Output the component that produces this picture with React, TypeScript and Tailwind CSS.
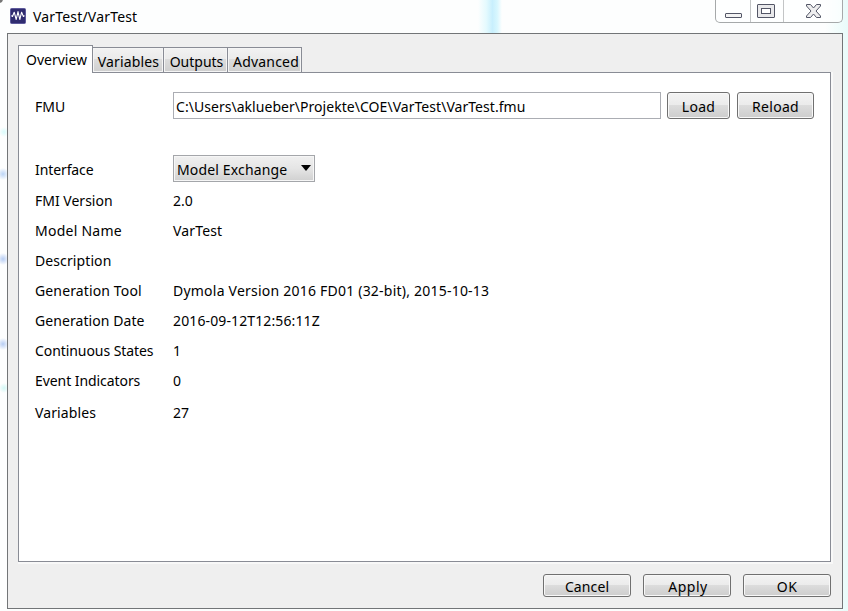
import type { ReactNode } from "react";

function Button({ children, className }: { children: ReactNode; className: string }) {
  return (
    <button
      className={`flex shrink-0 items-center justify-center rounded-[3px] border border-[#707070] bg-[linear-gradient(#f3f3f3_0%,#ebebeb_49%,#dcdcdc_50%,#cdcdcd_100%)] shadow-[inset_0_0_0_1px_#f8f8f8] ${className}`}
    >
      {children}
    </button>
  );
}

function Tab({ children, className }: { children: ReactNode; className: string }) {
  return (
    <div
      className={`mb-px flex h-[25px] items-center justify-center border-t border-r border-[#898c95] bg-[linear-gradient(#f2f2f2_0%,#ebebeb_45%,#dddddd_46%,#cfcfcf_100%)] pt-[3px] shadow-[inset_0_0_0_1px_#f5f5f5] ${className}`}
    >
      {children}
    </div>
  );
}

const rows = [
  { label: "FMI Version", value: "2.0", h: "h-[30px]", lt: "", vt: "" },
  { label: "Model Name", value: "VarTest", h: "h-[30px]", lt: "tracking-[0.25px]", vt: "tracking-[0.15px]" },
  { label: "Description", value: "", h: "h-[30px]", lt: "tracking-[0.1px]", vt: "" },
  {
    label: "Generation Tool",
    value: "Dymola Version 2016 FD01 (32-bit), 2015-10-13",
    h: "h-[30px]",
    lt: "tracking-[0.13px]",
    vt: "tracking-[0.22px]",
  },
  { label: "Generation Date", value: "2016-09-12T12:56:11Z", h: "h-[30px]", lt: "tracking-[0.07px]", vt: "tracking-[0.12px]" },
  { label: "Continuous States", value: "1", h: "h-[30px]", lt: "tracking-[-0.07px]", vt: "" },
  { label: "Event Indicators", value: "0", h: "h-[30px]", lt: "tracking-[-0.07px]", vt: "" },
  { label: "Variables", value: "27", h: "h-[34px]", lt: "tracking-[0.12px]", vt: "" },
];

function AppIcon() {
  return (
    <svg width="16" height="16" viewBox="0 0 16 16" className="block">
      <rect x="0.5" y="0.5" width="15" height="15" rx="1" fill="#302c70" stroke="#5d599b" />
      <path
        d="M1.5 7.5L2.5 8.5L4.2 4.2L6.2 11.5L8 3.6L9.8 11.5L11.6 4.2L13.4 8.5L14.4 7.5"
        fill="none"
        stroke="#fff"
        strokeWidth="1.1"
        strokeLinejoin="round"
      />
    </svg>
  );
}

function WindowControls() {
  return (
    <div className="flex h-[23px] w-[128px] rounded-b-[5px] border border-t-0 border-[#a6a9aa] bg-white/60">
      <div className="w-[35px] border-r border-[#c3c5c6]">
        <svg width="34" height="22" className="block">
          <rect x="9.5" y="13.5" width="16" height="4" rx="0.5" fill="#f3f3f3" stroke="#535666" />
        </svg>
      </div>
      <div className="w-[33px] border-r border-[#c3c5c6]">
        <svg width="32" height="22" className="block">
          <rect x="6.5" y="4.5" width="17" height="13" rx="0.5" fill="#e9e9eb" stroke="#535666" />
          <rect x="10.5" y="8.5" width="9" height="5" fill="#fff" stroke="#535666" />
        </svg>
      </div>
      <div className="flex-1">
        <svg width="58" height="22" className="block">
          <path
            d="M22.5 4.5H26.5L29.5 8L32.5 4.5H36.5V6L32 11L36.5 16V17.5H32.5L29.5 14L26.5 17.5H22.5V16L27 11L22.5 6Z"
            fill="#eeeeef"
            stroke="#535666"
            strokeLinejoin="round"
          />
        </svg>
      </div>
    </div>
  );
}

export default function App() {
  return (
    <div className="relative h-[611px] w-[848px] overflow-hidden bg-[#fdfefe] font-['Noto_Sans',sans-serif] text-[14px] leading-[20px] whitespace-nowrap text-black">
      <div className="absolute inset-0 bg-[radial-gradient(circle_at_4px_132px,#d9fbfb_0,transparent_5px),radial-gradient(circle_at_3px_174px,#bcd5f6_0,transparent_6px),radial-gradient(circle_at_3px_259px,#b7cdf3_0,transparent_6px),radial-gradient(circle_at_3px_344px,#b7cdf3_0,transparent_6px),radial-gradient(circle_at_4px_388px,#d2f7f5_0,transparent_5px),linear-gradient(90deg,transparent_825px,#e8fbfa_848px)]" />
      <div className="absolute top-0 left-[478px] h-[33px] w-[24px] bg-[linear-gradient(90deg,transparent,#e4fafe_35%,#c8effd_60%,#d8f7fe_80%,transparent)]" />
      <div className="absolute -top-px -left-px size-[4px] rounded-br-full bg-[#777]" />

      <div className="relative flex h-[33px] justify-between">
        <div className="flex pl-[10px]">
          <div className="pt-[8px]"><AppIcon /></div>
          <span className="pt-[7px] pl-[7px] tracking-[0.18px]">VarTest/VarTest</span>
        </div>
        <div className="mr-[5px]"><WindowControls /></div>
      </div>

      <div className="relative ml-[7px] h-[576px] w-[836px] border border-[#727577] bg-[#efefef] pl-[10px]">
        <div className="relative z-10 flex h-[39px] items-end">
          <div className="flex h-[28px] w-[75px] items-center justify-center border border-b-0 border-[#898c95] bg-white pl-[2px]">
            <span>Overview</span>
          </div>
          <Tab className="w-[71px] pl-px tracking-[0.15px]">Variables</Tab>
          <Tab className="w-[64px] pl-[2px]">Outputs</Tab>
          <Tab className="w-[74px] pl-[3px] tracking-[0.2px]">Advanced</Tab>
        </div>

        <div className="mt-[-1px] h-[490px] w-[813px] border border-[#898c95] bg-white pl-[16px] shadow-[1px_1px_0_1px_#f8f8f8]">
          <div className="flex h-[46px] items-end">
            <span className="w-[138px] self-end pb-[2px]">FMU</span>
            <div className="flex h-[27px] w-[488px] items-center border border-[#abadb3] pt-[3px] pl-[2px]">
              <span className="tracking-[0.04px]">C:\Users\aklueber\Projekte\COE\VarTest\VarTest.fmu</span>
            </div>
            <Button className="ml-[6px] h-[27px] w-[63px] pt-[3px] tracking-[0.25px]">Load</Button>
            <Button className="ml-[7px] h-[27px] w-[77px] pt-[3px] tracking-[0.3px]">Reload</Button>
          </div>

          <div className="mt-[36px] flex h-[27px] items-center">
            <span className="w-[138px] pt-[2px] tracking-[-0.1px]">Interface</span>
            <div className="flex h-[27px] w-[142px] items-center justify-between border border-[#a4a6aa] bg-[linear-gradient(#f0f0f0,#e5e5e5_50%,#d0d0d0)] pt-[3px] pr-[3px] pl-[3px] shadow-[inset_0_0_0_1px_#f6f6f6]">
              <span className="tracking-[0.15px]">Model Exchange</span>
              <svg width="10" height="6" className="mb-[5px]"><path d="M0 0H10L5 6Z" fill="#000" /></svg>
            </div>
          </div>

          <div className="mt-[4px]">
            {rows.map((r) => (
              <div key={r.label} className={`flex items-center ${r.h}`}>
                <span className="w-[138px]"><span className={r.lt}>{r.label}</span></span>
                <span className={r.vt}>{r.value}</span>
              </div>
            ))}
          </div>
        </div>

        <div className="mt-[12px] flex w-[813px] justify-end gap-[12px]">
          <Button className="h-[23px] w-[88px] pt-[2px] tracking-[0.1px]">Cancel</Button>
          <Button className="h-[23px] w-[88px] pt-[2px] pl-[2px] tracking-[0.5px]">Apply</Button>
          <Button className="h-[23px] w-[88px] pt-[2px] tracking-[0.4px]">OK</Button>
        </div>
      </div>
    </div>
  );
}
